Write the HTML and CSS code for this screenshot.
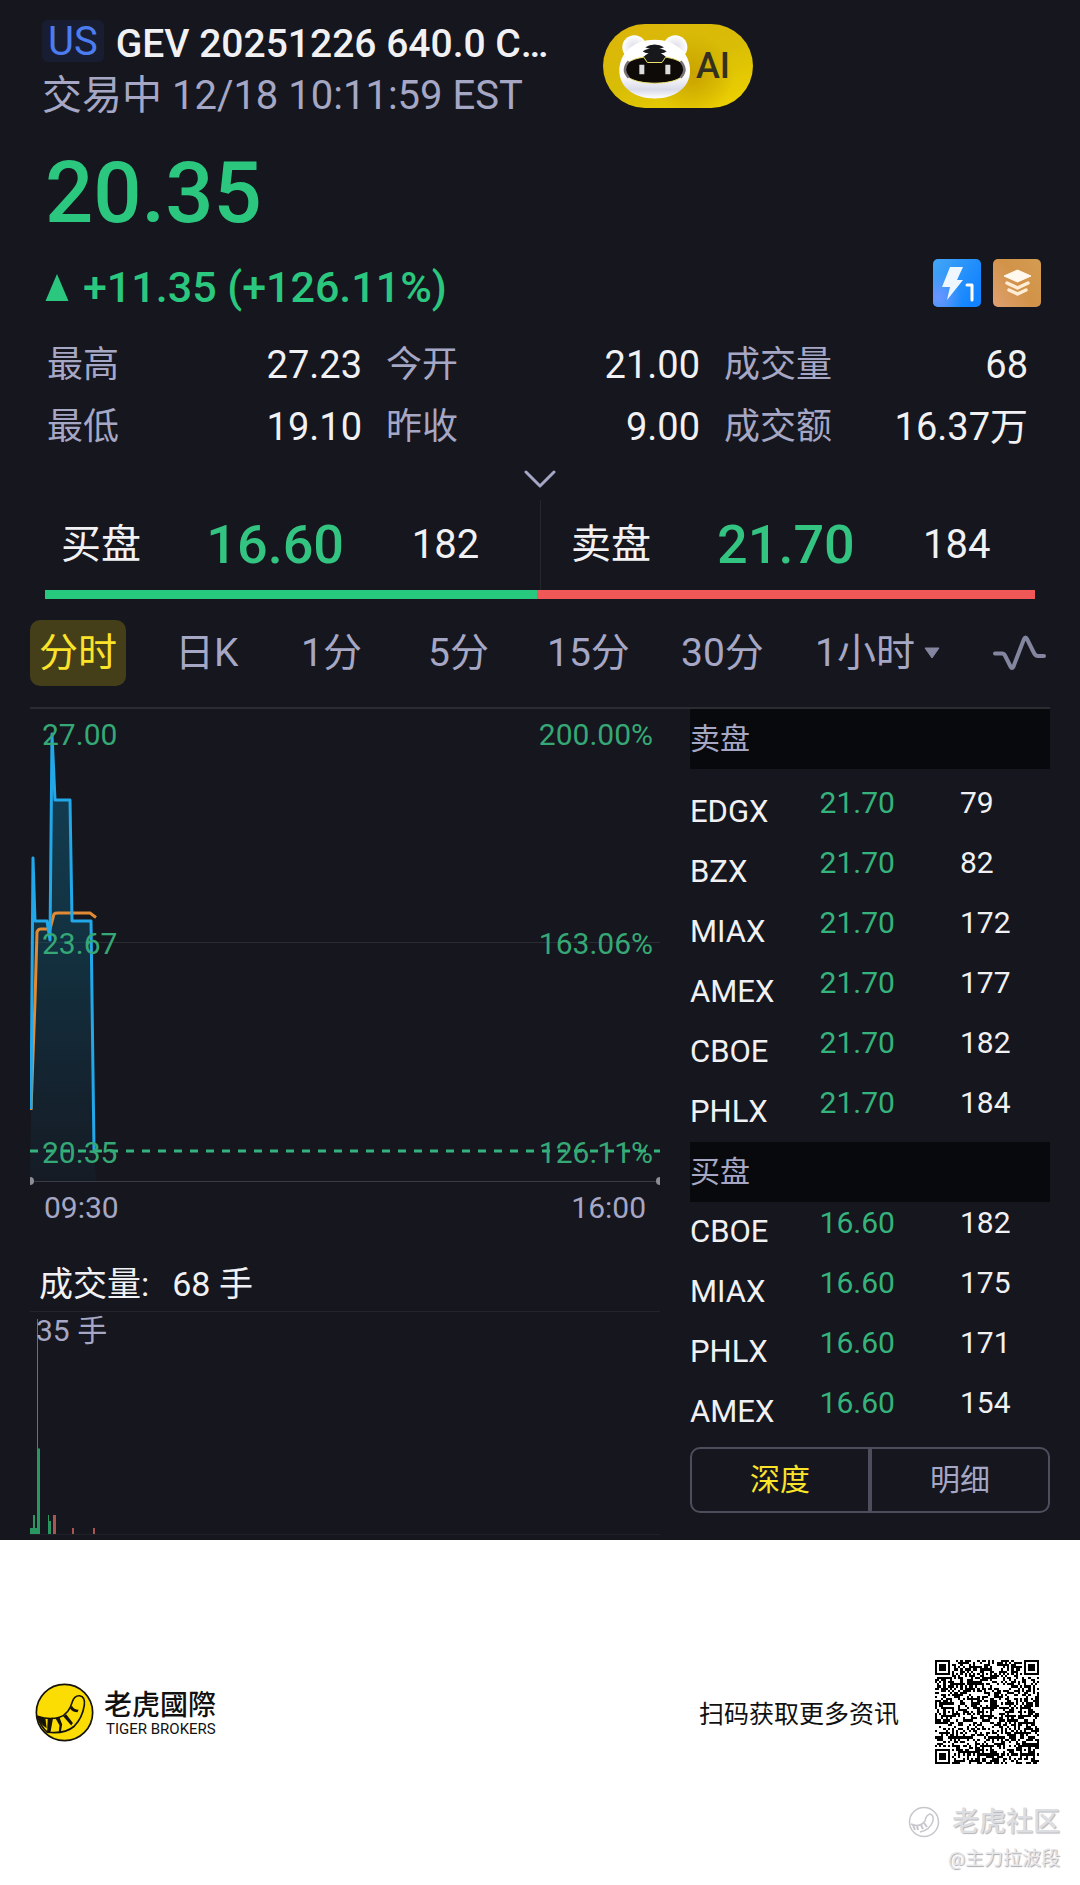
FILE: index.html
```html
<!DOCTYPE html>
<html lang="zh-CN">
<head>
<meta charset="utf-8">
<meta name="viewport" content="width=device-width, initial-scale=1">
<title>GEV 20251226 640.0 CALL</title>
<link rel="stylesheet" href="styles.css">
</head>
<body>
<main class="quote">
  <header class="head">
    <div class="head-text">
      <h1 class="title"><span class="market">US</span><span class="name">GEV 20251226 640.0 C…</span></h1>
      <p class="status">交易中 12/18 10:11:59 EST</p>
    </div>
    <button class="ai" type="button">
      <svg class="ai-face" viewBox="176 102 222 200" aria-hidden="true">
        <defs>
          <linearGradient id="head" x1="0" y1="0" x2="0" y2="1"><stop offset=".6" stop-color="#fff"/><stop offset=".85" stop-color="#d9dbe8"/><stop offset="1" stop-color="#fff"/></linearGradient>
          <radialGradient id="ear"><stop offset="0" stop-color="#dcdce6"/><stop offset="1" stop-color="#fff"/></radialGradient>
        </defs>
        <circle cx="225" cy="144" r="36" fill="url(#ear)"/>
        <circle cx="348" cy="144" r="36" fill="url(#ear)"/>
        <path d="M286 122c60 0 106 38 106 92 0 52-46 84-106 84s-106-32-106-84c0-54 46-92 106-92z" fill="url(#head)"/>
        <path d="M286 172c56 0 92 16 92 40s-36 40-92 40-92-16-92-40 36-40 92-40z" fill="#0d0a08" stroke="#ece26a" stroke-width="3"/>
        <path d="M208 186c-14 16-14 34 0 50M364 186c14 16 14 34 0 50" fill="none" stroke="#77717c" stroke-width="7"/>
        <path d="M252 172h68l-12 18h-44z" fill="#17181c" stroke="#ece26a" stroke-width="3"/>
        <path d="M258 144q12-8 28-8t28 8q-8 4-14 4 12 2 22 8-8 7-18 6 10 4 16 12h-68q6-8 16-12-10 1-18-6 10-6 22-8-6 0-14-4z" fill="#17181c"/>
        <path d="M240 197h15v28h-15zM318 197h15v28h-15z" fill="#dcdcdc"/>
      </svg>
      <span>AI</span>
    </button>
  </header>

  <p class="price">20.35</p>
  <div class="change-row">
    <p class="change"><svg class="up" viewBox="0 0 24 29" aria-hidden="true"><path d="M12 1 23.500 28H.5z" fill="currentColor"/></svg>+11.35 (+126.11%)</p>
    <div class="badges">
      <svg viewBox="0 0 48 48" aria-label="Level 1">
        <defs><linearGradient id="blue" x1="0" y1="0" x2="1" y2=".6"><stop offset="0" stop-color="#45a6f5"/><stop offset="1" stop-color="#1183ff"/></linearGradient>
        <radialGradient id="violet" cx=".1" cy=".8" r=".5"><stop offset="0" stop-color="#6b95ff"/><stop offset="1" stop-color="#6b95ff" stop-opacity="0"/></radialGradient></defs>
        <rect width="48" height="48" rx="5" fill="url(#blue)"/><rect width="48" height="48" rx="5" fill="url(#violet)"/>
        <path d="M17 8h13l-6 13h6L14 41l3-13H9z" fill="#eef6ff"/>
        <path d="M34 26h5v15" fill="none" stroke="#fff" stroke-width="3" stroke-linecap="round" stroke-linejoin="round"/>
      </svg>
      <svg viewBox="0 0 48 48" aria-label="Depth">
        <defs><linearGradient id="gold" x1="0" y1="1" x2="1" y2=".3"><stop offset="0" stop-color="#e0a072"/><stop offset=".6" stop-color="#d19348"/><stop offset="1" stop-color="#d39a50"/></linearGradient></defs>
        <rect width="48" height="48" rx="5" fill="url(#gold)"/>
        <path d="M24.500 11 38 17 24.500 23 11 17z" fill="#fff8ee" stroke="#fff8ee" stroke-linejoin="round"/>
        <path d="m14 24 10.500 5L35 24M16 31l8.500 4 8.500-4" fill="none" stroke="#ffedd6" stroke-width="3.500" stroke-linecap="round" stroke-linejoin="round"/>
      </svg>
    </div>
  </div>

  <dl class="stats">
    <div><dt>最高</dt><dd>27.23</dd></div>
    <div><dt>今开</dt><dd>21.00</dd></div>
    <div><dt>成交量</dt><dd>68</dd></div>
    <div><dt>最低</dt><dd>19.10</dd></div>
    <div><dt>昨收</dt><dd>9.00</dd></div>
    <div><dt>成交额</dt><dd>16.37万</dd></div>
  </dl>
  <button class="expand" type="button" aria-label="展开">
    <svg viewBox="0 0 32 20" aria-hidden="true"><path d="m2 3 14 14L30 3" fill="none" stroke="currentColor" stroke-width="3" stroke-linecap="round" stroke-linejoin="round"/></svg>
  </button>

  <section class="best">
    <div class="side"><span>买盘</span><strong>16.60</strong><span>182</span></div>
    <div class="side ask"><span>卖盘</span><strong>21.70</strong><span>184</span></div>
  </section>
  <div class="ratio"><span class="ratio-bid" style="flex-grow:182"></span><span class="ratio-ask" style="flex-grow:184"></span></div>

  <nav class="tabs">
    <button class="tab active" type="button">分时</button>
    <button class="tab" type="button">日K</button>
    <button class="tab" type="button">1分</button>
    <button class="tab" type="button">5分</button>
    <button class="tab" type="button">15分</button>
    <button class="tab" type="button">30分</button>
    <button class="tab" type="button">1小时<svg class="caret" viewBox="0 0 16 12" aria-hidden="true"><path d="M1 1h14L8 11z" fill="currentColor" stroke="currentColor" stroke-linejoin="round"/></svg></button>
    <button class="indicator" type="button" aria-label="指标"><svg viewBox="0 0 54 38" aria-hidden="true"><path d="M3 19.500h7q2 0 3 2l5.500 11q1.500 3 3 0L32 5q1.500-3 3 0l7 14q1.500 3 4 3h6" fill="none" stroke="currentColor" stroke-width="4" stroke-linecap="round"/></svg></button>
  </nav>

  <div class="board">
    <section class="charts">
      <div class="chart">
        <svg class="plot" viewBox="0 0 630 477" preserveAspectRatio="none" aria-hidden="true">
          <defs><linearGradient id="area" x1="0" y1="0" x2="0" y2="1"><stop offset="0" stop-color="#0f6488" stop-opacity=".55"/><stop offset=".5" stop-color="#0f5770" stop-opacity=".4"/><stop offset="1" stop-color="#124a66" stop-opacity=".1"/></linearGradient></defs>
          <path d="M0 233.500h630" stroke="#2a2c33"/>
          <path d="M0 472.500h630" stroke="#3a3b43"/>
          <path d="M1 401 3 149 5 212H17L20 231 22 25 25 91H40L42 212H61L64 441 66 472H0z" fill="url(#area)"/>
          <path d="M1 401 5 292 7 223Q8 220 11 220H20L24 205Q25 204 28 204H60L66 208.500" fill="none" stroke="#e08a35" stroke-width="3"/>
          <path d="M1 400 3 149 5 212H17L20 231 22 25 25 91H40L42 212H61L64 441" fill="none" stroke="#22a7e8" stroke-width="3" stroke-linejoin="round"/>
          <path d="M0 442h630" stroke="#35b37c" stroke-width="3" stroke-dasharray="8 8"/>
          <circle cx="0" cy="472" r="4" fill="#8d8d94"/><circle cx="630" cy="472" r="4" fill="#8d8d94"/>
        </svg>
        <div class="scale top"><span>27.00</span><span>200.00%</span></div>
        <div class="scale mid"><span>23.67</span><span>163.06%</span></div>
        <div class="scale low"><span>20.35</span><span>126.11%</span></div>
      </div>
      <div class="times"><span>09:30</span><span>16:00</span></div>
      <p class="vol-title"><span>成交量:</span><span>68 手</span></p>
      <div class="volume">
        <svg class="bars" viewBox="0 0 630 223" preserveAspectRatio="none" aria-hidden="true">
          <g fill="#2a9763"><path d="M0 217h3v6H0zM5 217h2v6H5zM3 204h2v19H3zM7 7h1v216H7zM8 137h2v86H8zM18 204h1v19h-1zM20 210h1v13h-1zM23 204h1v19h-1z"/></g>
          <g fill="#a65550"><path d="M19 210h1v13h-1zM24 204h2v19h-2zM42 217h2v6h-2zM63 217h2v6h-2z"/></g>
        </svg>
        <span class="vol-max">35 手</span>
      </div>
    </section>

    <section class="book">
      <h2>卖盘</h2>
      <table class="levels sell">
        <tr><th scope="row">EDGX</th><td class="px">21.70</td><td>79</td></tr>
        <tr><th scope="row">BZX</th><td class="px">21.70</td><td>82</td></tr>
        <tr><th scope="row">MIAX</th><td class="px">21.70</td><td>172</td></tr>
        <tr><th scope="row">AMEX</th><td class="px">21.70</td><td>177</td></tr>
        <tr><th scope="row">CBOE</th><td class="px">21.70</td><td>182</td></tr>
        <tr><th scope="row">PHLX</th><td class="px">21.70</td><td>184</td></tr>
      </table>
      <h2>买盘</h2>
      <table class="levels">
        <tr><th scope="row">CBOE</th><td class="px">16.60</td><td>182</td></tr>
        <tr><th scope="row">MIAX</th><td class="px">16.60</td><td>175</td></tr>
        <tr><th scope="row">PHLX</th><td class="px">16.60</td><td>171</td></tr>
        <tr><th scope="row">AMEX</th><td class="px">16.60</td><td>154</td></tr>
      </table>
      <div class="switch">
        <button class="on" type="button">深度</button><button type="button">明细</button>
      </div>
    </section>
  </div>
</main>

<footer class="foot">
  <div class="share">
    <div class="brand">
      <svg class="logo" viewBox="46 69 176 176" aria-hidden="true">
        <circle cx="134" cy="157" r="84" fill="#fbdd04" stroke="#15130a" stroke-width="5"/>
        <path d="M53 168q36 12 66 3 28-9 38-45 6-20 22-19 18 3 14 29-6 38-30 62-28 24-80 18Q64 200 53 168z" fill="#fbdd04" stroke="#15130a" stroke-width="5" stroke-linejoin="round"/>
        <path d="m53 168 24 6 4 30q-18-10-28-36zM84 174l16-1-8 44-10-2zM107 174l12-3 8 22-4 22h-6l2-20zM130 168l9-6 20 26-5 8zM150 144l6-7q6 12 20 12l-3 7q-16 0-23-12z" fill="#15130a"/>
      </svg>
      <div class="brand-text"><span class="brand-cn">老虎國際</span><span class="brand-en">TIGER BROKERS</span></div>
    </div>
    <div class="scan">
      <span>扫码获取更多资讯</span>
      <svg class="qr" id="qr" viewBox="0 0 49 49" role="img" aria-label="二维码" shape-rendering="crispEdges"></svg>
    </div>
  </div>
  <div class="credit">
    <div class="community">
      <svg viewBox="0 0 32 32" aria-hidden="true"><circle cx="16" cy="16" r="14.500" fill="none" stroke="#c6c7cc" stroke-width="1.500"/><path d="M3 18q9 4 14-3 1-6 5-7 4 1 3 7-3 9-13 11" fill="none" stroke="#c6c7cc" stroke-width="1.500"/><path d="m5 19 2 5M9 20l1 4M13 19l2 4M16 17l3 4" stroke="#c6c7cc" stroke-width="2"/></svg>
      <span>老虎社区</span>
    </div>
    <p class="author">@主力拉波段</p>
  </div>
</footer>
<script src="qr.js"></script>
</body>
</html>
```
FILE: styles.css
```css
* { box-sizing: border-box; }

body {
  margin: 0;
  background: #fff;
  color: #f1f1f4;
  font-family: Roboto, "Noto Sans CJK SC", sans-serif;
  font-size: 30px;
}

h1, h2, p, dl, dd { margin: 0; font-weight: 400; }

button {
  margin: 0;
  padding: 0;
  border: 0;
  background: none;
  color: inherit;
  font: inherit;
}

svg { display: block; }

.quote {
  background: #15161e;
  padding-top: 20px;
}

/* header */
.head {
  display: flex;
  align-items: flex-start;
  justify-content: flex-start;
  padding: 0 42px;
}

.head-text { width: 561px; }

.title {
  display: flex;
  gap: 12px;
  font-size: 39px;
  line-height: 48px;
}

.market {
  height: 42px;
  padding: 0 6px;
  border-radius: 6px;
  background: #191d31;
  color: #4c7df0;
  font-size: 40px;
  line-height: 43px;
}

.name { font-weight: 500; }

.status {
  color: #a5a7c4;
  font-size: 40px;
  line-height: 56px;
}

.ai {
  display: flex;
  align-items: center;
  gap: 4px;
  width: 150px;
  height: 84px;
  margin-top: 4px;
  padding-left: 15px;
  border-radius: 42px;
  background: radial-gradient(circle at 60% 60%, #c9a300 0%, rgba(201, 163, 0, 0) 40%), linear-gradient(160deg, #dcb40a, #d8bd06 50%, #f0d400);
  color: #33301f;
  font-size: 36px;
  font-weight: 500;
}

.ai-face { width: 74px; height: 67px; }

.price {
  padding: 0 45px;
  color: #2bc77f;
  font-size: 85px;
  font-weight: 500;
  line-height: 100px;
  margin-top: 19px;
}

.change-row {
  display: flex;
  align-items: center;
  justify-content: space-between;
  margin-top: 14px;
  padding: 0 39px 0 45px;
}

.change {
  display: flex;
  align-items: center;
  gap: 14px;
  color: #2bc77f;
  font-size: 43px;
  font-weight: 500;
  line-height: 60px;
}

.up { width: 24px; height: 29px; }

.badges { display: flex; gap: 12px; margin-bottom: 8px; }
.badges svg { width: 48px; height: 48px; }

/* day statistics */
.stats {
  display: grid;
  grid-template-columns: 315fr 314fr 304fr;
  column-gap: 24px;
  margin-top: 17px;
  padding: 0 52px 0 47px;
  font-size: 38px;
  line-height: 62px;
}

.stats div { display: flex; justify-content: space-between; height: 62px; }
.stats dt { color: #a5a7c4; font-size: 36px; }

.expand {
  display: block;
  width: 32px;
  margin: 11px auto 0;
  color: #a5a7c4;
}

.expand svg { width: 32px; height: 20px; }

/* best bid and ask */
.best {
  display: grid;
  grid-template-columns: 1fr 1fr;
  margin-top: 11px;
  padding: 0 45px;
  font-size: 40px;
}

.side {
  display: grid;
  grid-template-columns: 145fr 205fr 128fr;
  align-items: center;
  height: 90px;
  padding-left: 16px;
  line-height: 90px;
}

.side.ask {
  grid-template-columns: 146fr 206fr 112fr;
  border-left: 1px solid #24262e;
  padding-left: 30px;
}

.side strong { color: #33c481; font-size: 54px; font-weight: 500; }

.ratio { display: flex; height: 9px; margin: 0 45px; }
.ratio-bid { background: #27c97e; }
.ratio-ask { background: #ef5857; }

/* chart period */
.tabs {
  display: grid;
  grid-template-columns: 136fr 126fr 127fr 119fr 134fr 134fr 186fr 58fr;
  align-items: center;
  justify-items: start;
  margin: 21px 30px;
  color: #a5a7c4;
}

.tab {
  display: flex;
  align-items: center;
  height: 66px;
  padding: 0 9px;
  border-radius: 10px;
  font-size: 39px;
  line-height: 66px;
  white-space: nowrap;
}

.tab.active { background: #443e19; color: #fbe32a; }
.caret { width: 16px; height: 12px; margin-left: 9px; color: #84869f; }
.indicator { color: #84869f; }
.indicator svg { width: 54px; height: 38px; }

.board {
  display: grid;
  grid-template-columns: 630fr 360fr;
  column-gap: 30px;
  margin: 0 30px;
  border-top: 2px solid #2b2c31;
}

/* price chart */
.chart { position: relative; }
.plot { width: 100%; height: 477px; }

.scale {
  position: absolute;
  left: 12px;
  right: 7px;
  display: flex;
  justify-content: space-between;
  color: #35a876;
  font-size: 30px;
  line-height: 36px;
}

.scale.top { top: 8px; }
.scale.mid { top: 217px; }
.scale.low { top: 426px; }

.times {
  display: flex;
  justify-content: space-between;
  padding: 0 14px;
  color: #a5a7c4;
  line-height: 44px;
}

.vol-title {
  display: flex;
  gap: 23px;
  margin-top: 27px;
  padding-left: 9px;
  font-size: 34px;
  line-height: 54px;
}

.volume { position: relative; border-top: 1px solid #23242c; }

.bars { width: 100%; height: 223px; border-bottom: 1px solid #1f2028; }

.vol-max {
  position: absolute;
  left: 6px;
  top: 0;
  color: #a5a7c4;
  line-height: 38px;
}

/* order book */
.book h2 {
  height: 60px;
  background: #08090c;
  color: #a5a7c4;
  font-size: 30px;
  line-height: 60px;
}

.levels {
  width: 100%;
  border-collapse: collapse;
  table-layout: fixed;
}

.levels.sell { margin-top: 13px; }
.levels tr { height: 60px; }

.levels th, .levels td {
  padding: 0;
  font-size: 30px;
  font-weight: 400;
  line-height: 42px;
  text-align: left;
  vertical-align: top;
}

.levels th { width: 36%; font-size: 31px; line-height: 60px; }
.levels .px { width: 39%; color: #35b37c; }
.levels td:last-child { width: 25%; }

.switch { display: flex; margin: 5px 0 27px; }

.switch button {
  flex: 1;
  height: 66px;
  border: 2px solid #4d4e5b;
  border-radius: 0 10px 10px 0;
  color: #a5a7c4;
  line-height: 60px;
}

.switch .on { border-radius: 10px 0 0 10px; color: #fbe32a; }

/* share footer */
.foot { padding: 120px 20px 10px 35px; color: #111; }

.share, .brand, .scan, .community { display: flex; align-items: center; }
.share { justify-content: space-between; padding-right: 21px; }
.brand { gap: 10px; }
.logo { width: 59px; height: 59px; }
.brand-text { display: flex; flex-direction: column; gap: 1px; }
.brand-cn { font-family: "Noto Sans CJK TC", sans-serif; font-size: 28px; font-weight: 500; line-height: 32px; }
.brand-en { padding-left: 2px; font-size: 15px; line-height: 18px; }
.scan { gap: 36px; font-size: 25px; }
.qr { width: 104px; height: 104px; }

.credit { display: flex; flex-direction: column; align-items: flex-end; margin-top: 37px; }
.community { gap: 12px; color: #dddee1; font-size: 27px; font-weight: 500; line-height: 42px; text-shadow: 1px 1px 1px #b4b5ba; }
.community svg { width: 32px; height: 32px; }
.author { color: #e6e6e9; font-size: 19px; line-height: 32px; text-shadow: 1px 1px 1px #a6a7ac; }
```
FILE: qr.js
```js
// Draws a 49 x 49 module code: finder, alignment and timing patterns, then data modules.
(function () {
  var size = 49;
  var seed = 20251;
  function next() {
    seed = (seed * 1103515245 + 12345) % 2147483648;
    return seed / 2147483648;
  }
  function ring(x, y, cx, cy, outer) {
    var d = Math.max(Math.abs(x - cx), Math.abs(y - cy));
    if (d > outer) return null;
    return outer === 4 ? d === 3 || d < 2 : d !== 1;
  }
  function module(x, y) {
    var data = next() < 0.5;
    var finders = [[3, 3], [size - 4, 3], [3, size - 4]];
    var i, j, hit;
    for (i = 0; i < 3; i++) {
      hit = ring(x, y, finders[i][0], finders[i][1], 4);
      if (hit !== null) return hit;
    }
    var marks = [6, 24, 42];
    for (i = 0; i < 3; i++) {
      for (j = 0; j < 3; j++) {
        if ((i === 0 && j !== 1) || (j === 0 && i === 2)) continue;
        hit = ring(x, y, marks[i], marks[j], 2);
        if (hit !== null) return hit;
      }
    }
    if (x === 6 || y === 6) return (x + y) % 2 === 0;
    return data;
  }
  var d = "";
  for (var y = 0; y < size; y++) {
    for (var x = 0; x < size; x++) {
      if (module(x, y)) d += "M" + x + " " + y + "h1v1h-1z";
    }
  }
  var path = document.createElementNS("http://www.w3.org/2000/svg", "path");
  path.setAttribute("d", d);
  document.getElementById("qr").appendChild(path);
})();
```
